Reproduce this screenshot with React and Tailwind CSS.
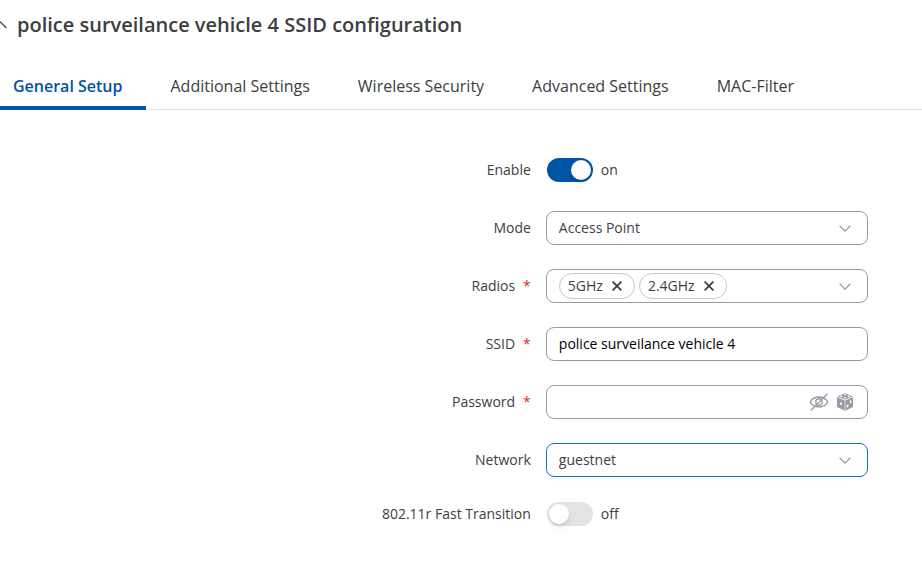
import React, { useState } from 'react';

const tabs = ['General Setup', 'Additional Settings', 'Wireless Security', 'Advanced Settings', 'MAC-Filter'];

const fieldClass =
  'h-[34px] w-full rounded-lg border bg-white px-3 text-sm leading-5 outline-none appearance-none';

function ChevronDown() {
  return (
    <svg className="pointer-events-none absolute right-[17px] top-3.5 h-2 w-3" viewBox="0 0 12 8" fill="none">
      <path d="M0.7 0.8 L6 6.1 L11.3 0.8" stroke="#9a9aa6" strokeWidth="1.3" />
    </svg>
  );
}

function CloseIcon() {
  return (
    <svg className="h-2.5 w-2.5" viewBox="0 0 10 10" fill="none">
      <path d="M0.6 0.6 L9.4 9.4 M9.4 0.6 L0.6 9.4" stroke="#3d3e40" strokeWidth="1.8" />
    </svg>
  );
}

function EyeOffIcon() {
  return (
    <svg className="h-[18px] w-5" viewBox="0 0 20 18" fill="none" stroke="#9a9aa6" strokeWidth="1.4">
      <path d="M1.2 9 C5 2.4 15 2.4 18.8 9 C15 15.6 5 15.6 1.2 9 Z" />
      <circle cx="10" cy="9" r="3.2" />
      <path d="M1.8 17.4 L18.4 0.8" />
    </svg>
  );
}

function DiceIcon() {
  return (
    <svg className="h-[18px] w-4" viewBox="0 0 16 18">
      <path d="M8 0.2 L15.6 3.3 L8 6.7 L0.4 3.3 Z" fill="#9a9aa6" />
      <path d="M0 4 L7.7 7.4 V17.8 L0 14 Z" fill="#9a9aa6" />
      <path d="M16 4 L8.3 7.4 V17.8 L16 14 Z" fill="#9a9aa6" />
      <g fill="#fff">
        <ellipse cx="8" cy="1.8" rx="1.3" ry="0.6" />
        <ellipse cx="4.2" cy="3.3" rx="1.3" ry="0.7" />
        <ellipse cx="11.8" cy="3.3" rx="1.3" ry="0.7" />
        <ellipse cx="8" cy="4.9" rx="1.3" ry="0.6" />
        <ellipse cx="3.8" cy="10.8" rx="1" ry="1.5" />
        <ellipse cx="10.5" cy="13" rx="0.9" ry="1.5" />
        <ellipse cx="13.6" cy="8.8" rx="0.9" ry="1.5" />
      </g>
    </svg>
  );
}

function Row({ label, htmlFor, required, children }) {
  return (
    <div className="flex items-center">
      <label htmlFor={htmlFor} className="w-7/12 pr-[7px] text-right">
        {label}
        {required && <span className="ml-2 text-[#e02a2a]">*</span>}
      </label>
      <div className="flex-1 pl-2">
        <div className="relative w-full max-w-[322px]">{children}</div>
      </div>
    </div>
  );
}

function Toggle({ id, checked, onChange }) {
  return (
    <div className="ml-px flex items-center gap-2">
      <input
        id={id}
        type="checkbox"
        role="switch"
        checked={checked}
        onChange={(e) => onChange(e.target.checked)}
        className="h-6 w-[46px] cursor-pointer appearance-none rounded-full bg-[#e3e3e3] p-0.5 before:block before:size-5 before:rounded-full before:bg-white before:shadow-md checked:bg-[#0054a6] checked:before:ml-[22px]"
      />
      <span>{checked ? 'on' : 'off'}</span>
    </div>
  );
}

export default function App() {
  const [activeTab, setActiveTab] = useState('General Setup');
  const [enabled, setEnabled] = useState(true);
  const [fastTransition, setFastTransition] = useState(false);
  const [mode, setMode] = useState('Access Point');
  const [radios, setRadios] = useState(['5GHz', '2.4GHz']);
  const [ssid, setSsid] = useState('police surveilance vehicle 4');
  const [password, setPassword] = useState('');
  const [showPassword, setShowPassword] = useState(false);
  const [network, setNetwork] = useState('guestnet');

  const generatePassword = () => setPassword(Math.random().toString(36).slice(2, 12));

  return (
    <div className="min-h-screen overflow-x-hidden bg-white font-['Open_Sans',sans-serif] text-sm leading-5 text-[#3d3e40]">
      <header className="flex items-center pt-2.5">
        <button type="button" aria-label="Collapse" className="-ml-1.5 mr-2.5">
          <svg className="h-2 w-[13px]" viewBox="0 0 13 8" fill="none">
            <path d="M0.6 7 L6.5 1 L12.4 7" stroke="#3d3e40" strokeWidth="1.2" />
          </svg>
        </button>
        <h1 className="text-xl leading-[30px] font-semibold">police surveilance vehicle 4 SSID configuration</h1>
      </header>

      {/* Tabs */}
      <nav className="mt-6 flex border-b border-[#e3e3e3]" role="tablist">
        {tabs.map((tab) => (
          <button
            key={tab}
            type="button"
            role="tab"
            aria-selected={activeTab === tab}
            onClick={() => setActiveTab(tab)}
            className={`-mb-px cursor-pointer border-b-4 px-6 pt-2.5 pb-2 text-base whitespace-nowrap first:pl-[13px] ${
              activeTab === tab ? 'border-[#0054a6] font-semibold text-[#0054a6]' : 'border-transparent'
            }`}
          >
            {tab}
          </button>
        ))}
      </nav>

      <form className="flex flex-col gap-6 pt-[43px] pb-8" onSubmit={(e) => e.preventDefault()}>
        <Row label="Enable" htmlFor="enable">
          <div className="flex h-[34px] items-center">
            <Toggle id="enable" checked={enabled} onChange={setEnabled} />
          </div>
        </Row>

        <Row label="Mode" htmlFor="mode">
          <select
            id="mode"
            value={mode}
            onChange={(e) => setMode(e.target.value)}
            className={`${fieldClass} border-[#9a9aa6]`}
          >
            <option>Access Point</option>
            <option>Client</option>
            <option>Mesh</option>
          </select>
          <ChevronDown />
        </Row>

        <Row label="Radios" htmlFor="radios" required>
          <div
            id="radios"
            role="group"
            aria-label="Radios"
            className={`${fieldClass} flex items-center gap-1 border-[#9a9aa6]`}
          >
            {radios.map((radio) => (
              <span
                key={radio}
                className="flex h-[26px] items-center gap-[9px] rounded-full border border-[#c8c8c8] pr-3 pl-2"
              >
                {radio}
                <button
                  type="button"
                  aria-label={`Remove ${radio}`}
                  className="cursor-pointer"
                  onClick={() => setRadios(radios.filter((r) => r !== radio))}
                >
                  <CloseIcon />
                </button>
              </span>
            ))}
          </div>
          <ChevronDown />
        </Row>

        <Row label="SSID" htmlFor="ssid" required>
          <input
            id="ssid"
            type="text"
            value={ssid}
            onChange={(e) => setSsid(e.target.value)}
            className={`${fieldClass} border-[#9a9aa6] pb-0.5 text-black`}
          />
        </Row>

        <Row label="Password" htmlFor="password" required>
          <div className="flex h-[34px] items-center gap-2 rounded-lg border border-[#9a9aa6] pr-3.5 pl-3">
            <input
              id="password"
              type={showPassword ? 'text' : 'password'}
              value={password}
              onChange={(e) => setPassword(e.target.value)}
              className="min-w-0 flex-1 text-black outline-none"
            />
            <button
              type="button"
              aria-label="Show password"
              className="cursor-pointer"
              onClick={() => setShowPassword(!showPassword)}
            >
              <EyeOffIcon />
            </button>
            <button type="button" aria-label="Generate password" className="cursor-pointer" onClick={generatePassword}>
              <DiceIcon />
            </button>
          </div>
        </Row>

        <Row label="Network" htmlFor="network">
          <select
            id="network"
            value={network}
            onChange={(e) => setNetwork(e.target.value)}
            className={`${fieldClass} border-[#0a74e0]`}
          >
            <option>guestnet</option>
            <option>lan</option>
          </select>
          <ChevronDown />
        </Row>

        <Row label="802.11r Fast Transition" htmlFor="fast-transition">
          <div className="flex h-[26px] items-center">
            <Toggle id="fast-transition" checked={fastTransition} onChange={setFastTransition} />
          </div>
        </Row>
      </form>
    </div>
  );
}
